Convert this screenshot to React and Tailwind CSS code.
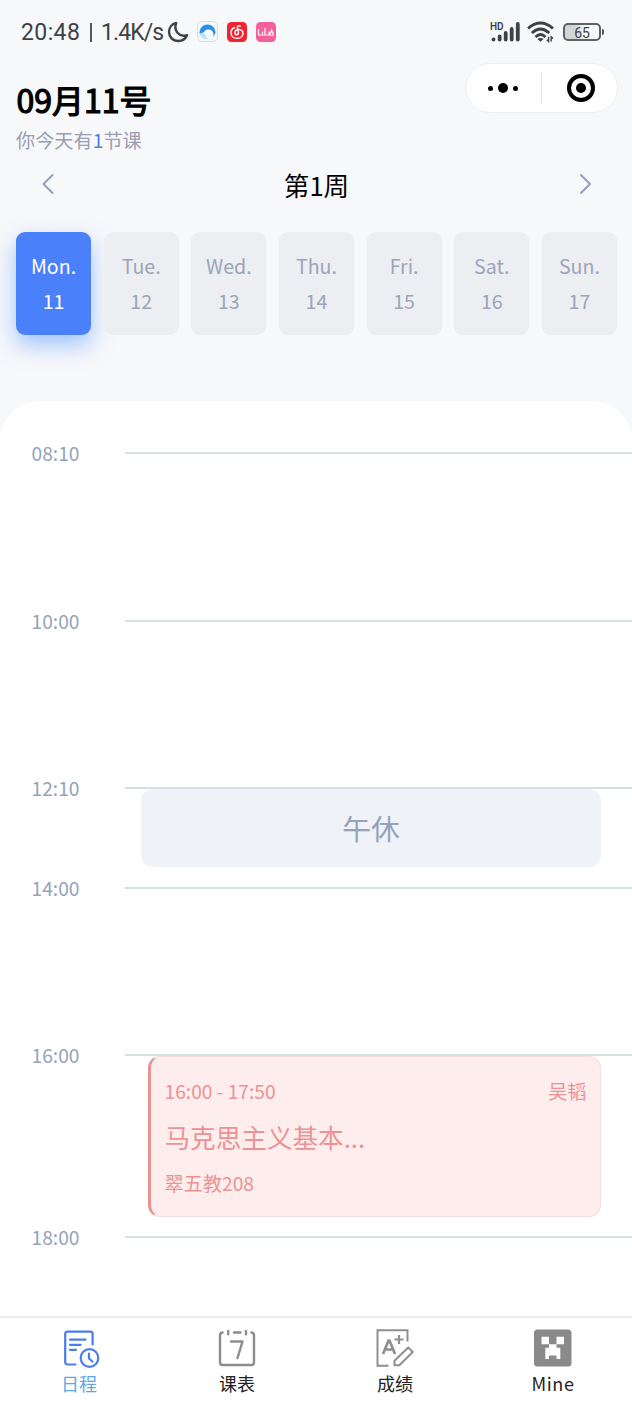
const days = [
  { name: "Mon.", date: 11 },
  { name: "Tue.", date: 12 },
  { name: "Wed.", date: 13 },
  { name: "Thu.", date: 14 },
  { name: "Fri.", date: 15 },
  { name: "Sat.", date: 16 },
  { name: "Sun.", date: 17 },
];

function StatusBar() {
  return (
    <div className="flex h-[63px] items-center justify-between pl-[21px] pr-[28px] text-[#404144]">
      <div className="flex items-center">
        <div className="flex w-[146px] items-center whitespace-nowrap pt-[2px] font-['Roboto',sans-serif] text-[23px] leading-8">
          <span className="w-[69px] tracking-[0.4px]">20:48</span>
          <span className="h-[19px] w-[2px] bg-[#55575a]" />
          <span className="pl-[9px] tracking-[-0.9px]">1.4K/s</span>
        </div>
        <svg className="h-[22px] w-[22px]" viewBox="0 0 22 22" fill="none" stroke="currentColor" strokeWidth="2.400" strokeLinejoin="round">
          <path d="M9.200 2C4.800 3 2 6.500 2 10.700C2 15.900 5.900 20 11.200 20C15.300 20 18.600 17.500 20 14.200C12.600 16.600 6.200 10 9.200 2Z" />
        </svg>
        <svg className="ml-[8px] h-[21px] w-[21px]" viewBox="0 0 21 21">
          <rect x="0.500" y="0.500" width="20" height="20" rx="4.500" fill="#f2f8fc" stroke="#d3dfe9" />
          <path d="M2.500 11.500A8 8 0 0 1 18.500 11.500Q18 14 16 15.500A4.800 4.800 0 0 0 11 8.500C8 8.500 6.200 11 6.800 15.500Q3 14.500 2.500 11.500Z" fill="#2f8fe0" />
          <path d="M2.800 12.500Q5 19 11.500 18Q7.800 16 7 11Z" fill="#b4e2f8" />
        </svg>
        <svg className="ml-[9px] h-[20px] w-[20px]" viewBox="0 0 20 20">
          <rect width="20" height="20" rx="4.500" fill="#ef2630" />
          <path d="M13.300 4.200C11.800 3.100 10.200 4 10.400 5.700L11.500 10.800C11.700 13.500 7.900 13.200 7.900 10.700C7.900 8.600 9.800 7.500 11.900 7.500C14.700 7.500 16.200 9.500 16 11.800C15.700 14.600 13 16.400 10 16.400C6.500 16.400 4 14 4 10.700C4 8.200 5.500 6.300 7.600 5.500" fill="none" stroke="#fff" strokeWidth="1.400" strokeLinecap="round" />
        </svg>
        <svg className="ml-[9px] h-[20px] w-[20px]" viewBox="0 0 20 20">
          <rect width="20" height="20" rx="4.500" fill="#f4609c" />
          <path d="M2.500 7.500V13H5M6.500 9.500V13M9 6V13H11.500M13 9.500V13M14 13L15.700 8L17.500 13" fill="none" stroke="#fff" strokeWidth="1.200" />
          <path d="M2 13.300H18" stroke="#fbb7d2" strokeWidth="1.400" />
        </svg>
      </div>
      <div className="flex items-center">
        <svg className="h-[22px] w-[31px]" viewBox="0 0 31 22">
          <text x="0" y="8.500" fontFamily="Roboto, sans-serif" fontSize="10" fontWeight="600" fill="#404144">HD</text>
          <g stroke="#404144" strokeWidth="3.800" strokeLinecap="round">
            <path d="M3.500 18.300V18.500" />
            <path d="M9.700 15.500V18.500" />
            <path d="M15.700 12V18.500" />
            <path d="M21.700 8V18.500" />
            <path d="M27.800 3V18.500" />
          </g>
        </svg>
        <svg className="ml-[6px] h-[22px] w-[28px]" viewBox="0 0 28 22" fill="none" stroke="#404144" strokeWidth="2.800">
          <path d="M1 7.500Q13.500 -3.500 26 7.500" />
          <path d="M4.800 12Q13.500 4 22.200 12" />
          <path d="M8.500 16Q13.500 11 18.500 16" />
          <path d="M10.400 18Q13.500 15.800 16.600 18L13.500 20.800Z" fill="#404144" stroke="none" />
          <path d="M21.600 15.800V20.500L19.800 18.800M24.200 20.500V15.800L26 17.500" strokeWidth="1.400" />
        </svg>
        <div className="ml-[8px] flex h-[18px] w-[38px] items-center justify-center rounded-[5px] border-2 border-[#606265] bg-linear-to-r from-[#d4d5d7] from-30% to-[#f7f8fa] to-60% pt-[2px] font-['Roboto',sans-serif] text-[14px] leading-[14px]">65</div>
        <div className="ml-[1px] h-[6px] w-[2px] rounded-r-sm bg-[#55575a]" />
      </div>
    </div>
  );
}

function Capsule() {
  return (
    <div className="flex h-[50px] w-[153px] items-center rounded-full border border-[#eeeff1] bg-[#fefefe]">
      <div className="flex w-[75px] items-center justify-center gap-[5px] pr-px">
        <span className="size-[5px] rounded-full bg-black" />
        <span className="size-[10px] rounded-full bg-black" />
        <span className="size-[5px] rounded-full bg-black" />
      </div>
      <div className="h-[32px] w-px bg-[#e3e4e6]" />
      <div className="flex flex-1 items-center justify-center pl-[3px]">
        <div className="flex size-[28px] items-center justify-center rounded-full border-4 border-black">
          <span className="size-[10px] rounded-full bg-black" />
        </div>
      </div>
    </div>
  );
}

function Chevron({ flip }) {
  return (
    <svg className="h-[22px] w-[14px]" viewBox="0 0 14 22" fill="none" stroke="#94a0bb" strokeWidth="2" strokeLinecap="round" strokeLinejoin="round">
      <path d={flip ? "M3 2L12 11L3 20" : "M11.500 2L2.500 11L11.500 20"} />
    </svg>
  );
}

function Slot({ time, height, children }) {
  return (
    <div className={`flex ${height}`}>
      <div className="-mt-[14px] h-[30px] w-[125px] shrink-0 pl-[31.500px] text-[19.200px] leading-[30px] text-[#95a3b9]">{time}</div>
      <div className="flex-1 border-t-2 border-[#d6e0e3]">{children}</div>
    </div>
  );
}

function ScheduleIcon() {
  return (
    <svg className="size-[38px] overflow-visible" viewBox="0 0 38 38" fill="none" stroke="#4a7ded" strokeWidth="2.200" strokeLinecap="round" strokeLinejoin="round">
      <path d="M15.500 35.500H7.500Q5.200 35.500 5.200 33V5Q5.200 2.700 7.500 2.700H30.300Q32.600 2.700 32.600 5V15.500" />
      <path d="M10 10.700H25.500M10 15.800H20.500M10 20.800H16" />
      <circle cx="29.500" cy="29" r="8.800" />
      <path d="M29 24.500V29.500L32.500 32.500" />
    </svg>
  );
}

function TimetableIcon() {
  return (
    <svg className="size-[38px]" viewBox="0 0 38 38" fill="none" stroke="#8c8c8c" strokeWidth="2.400" strokeLinecap="round" strokeLinejoin="round">
      <path d="M4.500 3.500Q2 4 2 6.500V33.500Q2 36 4.500 36H33.500Q36 36 36 33.500V6.500Q36 4 33.500 3.500" />
      <path d="M10.200 2V5.300M16 3.500H22.500M28 2V5.300" />
      <path d="M13 12.500H24.500L19.500 29" />
    </svg>
  );
}

function GradesIcon() {
  return (
    <svg className="size-[38px]" viewBox="0 0 38 38" fill="none" stroke="#8f8f8f" strokeWidth="2">
      <path d="M12.500 36.700H1.500V1.300H31.500V12.500" />
      <path d="M7 25L12.500 11.500H13.500L19 25M9 20.500H17" strokeWidth="2.700" />
      <path d="M18.500 10.500H27.500M23 6V15" strokeWidth="2.200" />
      <path d="M32.200 18.500L36.800 23L23.300 36.300H18.500V31.800Z" strokeLinejoin="round" />
    </svg>
  );
}

function MineIcon() {
  return (
    <svg className="size-[38px]" viewBox="0 0 38 38">
      <rect x="0" y="0.500" width="37.500" height="37" rx="3.500" fill="#8a8a8a" />
      <path d="M7.500 7.800H15V15.300H22.500V7.800H30V15.300H22.500V18.800H26.300V30H22.500V26.500H15V30H11.300V18.800H15V15.300H7.500Z" fill="#fff" />
    </svg>
  );
}

const tabs = [
  { label: "日程", Icon: ScheduleIcon, active: true },
  { label: "课表", Icon: TimetableIcon },
  { label: "成绩", Icon: GradesIcon },
  { label: "Mine", Icon: MineIcon },
];

export default function App() {
  return (
    <div className="flex h-[1405px] w-[632px] flex-col overflow-hidden bg-[#f7f8fa] font-['Noto_Sans_CJK_SC',sans-serif]">
      <StatusBar />
      <header className="flex h-[96px] items-start justify-between pl-4 pr-[14px]">
        <div className="pt-[12px]">
          <h1 className="pl-[0.500px] text-[32px] font-normal leading-[48px] text-black [-webkit-text-stroke:1.200px_black]">09月11号</h1>
          <p className="pt-[2px] text-[19.200px] leading-[30px] text-[#9a9db3]">
            你今天有<span className="text-[#4b7fe0]">1</span>节课
          </p>
        </div>
        <Capsule />
      </header>
      <div className="flex h-[73px] items-start justify-between pl-[41px] pr-[40px] pt-[6px]">
        <div className="pt-[8px]"><Chevron /></div>
        <h2 className="pt-px text-[25.600px] leading-[38px] text-black">第1周</h2>
        <div className="pt-[8px]"><Chevron flip /></div>
      </div>
      <div className="flex h-[169px] justify-between pl-4 pr-[15px]">
        {days.map((d, i) => (
          <div
            key={d.name}
            className={`flex h-[103px] w-[75px] flex-col items-center rounded-[9px] pt-[16px] text-[19.600px] leading-[35px] ${
              i === 0 ? "bg-[#4a80fa] text-white shadow-[0_10px_22px_rgba(74,144,255,0.5)]" : "bg-[#edeef2] text-[#9aa5ba]"
            }`}
          >
            <span>{d.name}</span>
            <span>{d.date}</span>
          </div>
        ))}
      </div>
      <main className="h-[915px] shrink-0 rounded-t-[40px] bg-white pt-[51px]">
        <Slot time="08:10" height="h-[168px]" />
        <Slot time="10:00" height="h-[167px]" />
        <Slot time="12:10" height="h-[100px]">
          <div className="ml-4 mr-[31px] flex h-[78px] items-center justify-center rounded-[12px] bg-[#eff2f7] text-[28.800px] text-[#94a3bb]">午休</div>
        </Slot>
        <Slot time="14:00" height="h-[167px]" />
        <Slot time="16:00" height="h-[182px]">
          <div className="ml-[23px] mr-[31px] h-[161px] rounded-[12px] border border-l-[3px] border-[#f6dde0] border-l-[#e99294] bg-[#feeded] pl-[13.500px] pr-[13.500px] pt-[19px] text-[#ec9294]">
            <div className="flex justify-between text-[19.200px] leading-[30px]">
              <span>16:00 - 17:50</span>
              <span>吴韬</span>
            </div>
            <div className="mt-[11px] text-[25.600px] leading-[40px]">马克思主义基本...</div>
            <div className="mt-[11px] text-[19.200px] leading-[30px]">翠五教208</div>
          </div>
        </Slot>
        <Slot time="18:00" height="h-[60px]" />
      </main>
      <nav className="grid h-[89px] shrink-0 grid-cols-4 border-t-2 border-[#ededee] bg-white">
        {tabs.map(({ label, Icon, active }) => (
          <div key={label} className="flex flex-col items-center pt-[11px]">
            <Icon />
            <span className={`text-[18px] leading-[32px] ${active ? "text-[#5aa9e6]" : "text-[#222222]"} ${label === "Mine" ? "tracking-[0.600px]" : ""}`}>{label}</span>
          </div>
        ))}
      </nav>
    </div>
  );
}
